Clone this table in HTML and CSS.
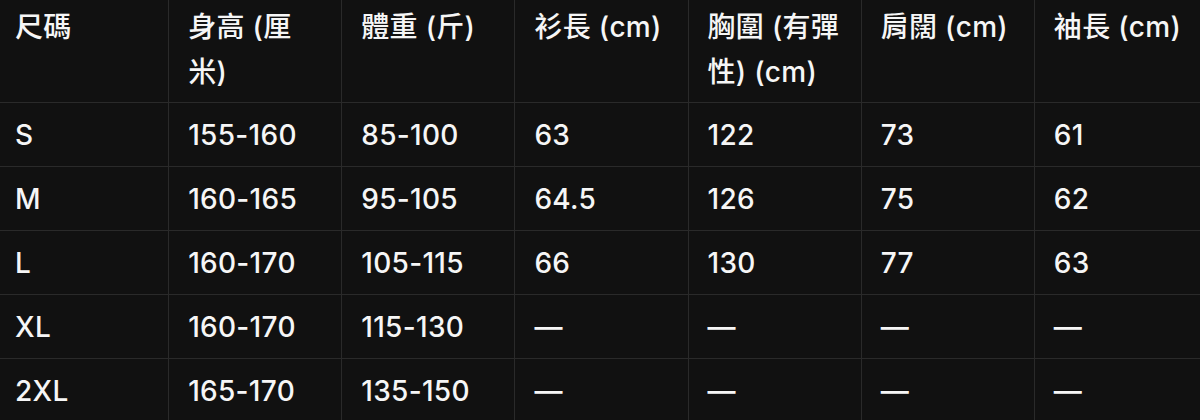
FILE: index.html
```html
<!DOCTYPE html>
<html lang="zh-Hant">
<head>
<meta charset="utf-8">
<title>尺碼表</title>
<link rel="stylesheet" href="styles.css">
</head>
<body>
<div class="wrap">
<table class="size-table">
<thead>
<tr><th>尺碼</th><th>身高 (厘米)</th><th>體重 (斤)</th><th>衫長 (cm)</th><th>胸圍 (有彈性) (cm)</th><th>肩闊 (cm)</th><th>袖長 (cm)</th></tr>
</thead>
<tbody>
<tr><td>S</td><td>155-160</td><td>85-100</td><td>63</td><td>122</td><td>73</td><td>61</td></tr>
<tr><td>M</td><td>160-165</td><td>95-105</td><td>64.5</td><td>126</td><td>75</td><td>62</td></tr>
<tr><td>L</td><td>160-170</td><td>105-115</td><td>66</td><td>130</td><td>77</td><td>63</td></tr>
<tr><td>XL</td><td>160-170</td><td>115-130</td><td>—</td><td>—</td><td>—</td><td>—</td></tr>
<tr><td>2XL</td><td>165-170</td><td>135-150</td><td>—</td><td>—</td><td>—</td><td>—</td></tr>
</tbody>
</table>
</div>
</body>
</html>
```
FILE: styles.css
```css
html, body {
  margin: 0;
  padding: 0;
  background: #111111;
  overflow: hidden;
}
.wrap {
  width: 1200px;
  height: 420px;
  overflow: hidden;
}
.size-table {
  margin-left: -5px;
  width: 1213px;
  table-layout: fixed;
  border-collapse: collapse;
  font-family: Inter, "Noto Sans CJK TC", sans-serif;
  font-size: 28px;
  font-weight: 500;
  letter-spacing: 0.3px;
  color: #f6f6f6;
}
.size-table th,
.size-table td {
  text-align: left;
  vertical-align: top;
  padding: 0 20px 0 19px;
  border: 1px solid #2a2a2a;
  line-height: 44px;
}
.size-table th {
  font-weight: 500;
  line-height: 45px;
  padding-top: 5px;
  padding-bottom: 7px;
}
.size-table td {
  padding-top: 10px;
  padding-bottom: 9px;
}
.size-table tr:first-child th {
  border-top: none;
}
```
